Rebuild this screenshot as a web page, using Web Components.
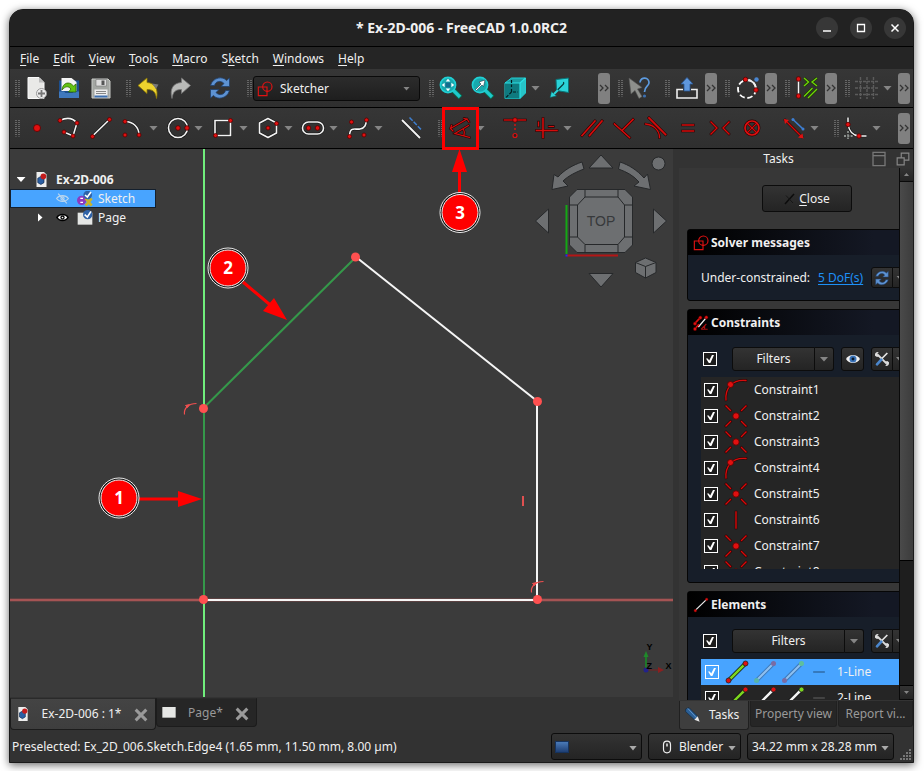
<!DOCTYPE html>
<html lang="en">
<head>
<meta charset="utf-8">
<title>Ex-2D-006 - FreeCAD 1.0.0RC2</title>
<style>
  html, body { height: 100%; margin: 0; }
  body { background: #fff; font: 12px/18px "Noto Sans", sans-serif; color: #f0f0f0; overflow: hidden; }
</style>
</head>
<body>
<app-window></app-window>

<script>
/* ---------- icon drawings, all on a 24 x 24 grid ---------- */
const dot = (x, y, r = 2) => `<circle cx="${x}" cy="${y}" r="${r}" fill="#e01010" stroke="#5a0000" stroke-width=".8"/>`;
const sel = (d, w = 1.7) => `<path d="${d}" fill="none" stroke="#2a0000" stroke-width="${w + 1}" stroke-linecap="square"/><path d="${d}" fill="none" stroke="#d40c0c" stroke-width="${w - .1}" stroke-linecap="square"/>`;
const wht = (d, w = 1.6) => `<path d="${d}" fill="none" stroke="#111" stroke-width="${w + 1}"/><path d="${d}" fill="none" stroke="#f4f4f4" stroke-width="${w}"/>`;
const seg = (a, b, c) => `<path d="M3.500 20.500L20.500 3.500" stroke="#111" stroke-width="4"/><path d="M3.500 20.500L20.500 3.500" stroke="${c}" stroke-width="2.500"/><circle cx="3.500" cy="20.500" r="2.500" fill="${a}" stroke="#222" stroke-width=".8"/><circle cx="20.500" cy="3.500" r="2.500" fill="${b}" stroke="#222" stroke-width=".8"/>`;
const pale = (a, b) => `<path d="M3.500 20.500L20.500 3.500" stroke="#3d78b8" stroke-width="4"/><path d="M3.500 20.500L20.500 3.500" stroke="#8fc0f0" stroke-width="2"/><circle cx="3.500" cy="20.500" r="2.500" fill="${a}"/><circle cx="20.500" cy="3.500" r="2.500" fill="${b}"/>`;
const lens = `<path d="M14 14L21.500 21.500" stroke="#075" stroke-width="5"/><path d="M14 14L21 21" stroke="#20c8cc" stroke-width="3.200"/><circle cx="9" cy="9" r="7.600" fill="#17a9ad" stroke="#20d0d4" stroke-width="1.600"/>`;
const ICONS = {
  'new': `<path d="M3 1.500H14L19 6.500V22.500H3Z" fill="#e9e9e7" stroke="#fafafa"/><path d="M14 1.500V6.500H19Z" fill="#bbb"/><circle cx="16.500" cy="17.500" r="5" fill="#eee" stroke="#999"/><path d="M16.500 14V21M13 17.500H20" stroke="#777" stroke-width="1.800"/>`,
  open: `<path d="M2 4.500H22V22H2Z" fill="#1c4f8f"/><path d="M4.500 2H14.500L19.500 6V15H4.500Z" fill="#f4f4f4"/><path d="M2 15.500H7L8.500 17H15.500L17 15.500H22V22H2Z" fill="#3f78bd"/><path d="M5 14C5.500 7 12 4.500 16.500 10L19 8V16H11.500L14 13C11 9.500 8 10.500 5 14Z" fill="#63c313" stroke="#2c6804" stroke-width=".8"/>`,
  save: `<path d="M3 3H19L21 5V22H3Z" fill="#a3a6a2" stroke="#c9cbc8"/><path d="M7 3.500H17.500V10H7Z" fill="#ddd" stroke="#777" stroke-width=".6"/><path d="M12.500 4.500H15.500V9H12.500Z" fill="#555"/><path d="M5.500 13.500H18.500V21.500H5.500Z" fill="#eee"/><path d="M7 15.500H17M7 17.500H17" stroke="#888"/><path d="M5.500 19.500H18.500V21.500H5.500Z" fill="#3d6fb0"/>`,
  undo: `<path d="M2 9.500L11 2V6.500C19 7 22.500 13 20.500 22.500C19.500 15.500 17 13.500 11 13.500V17.500Z" fill="#edd22e" stroke="#8d7a08" stroke-width=".8"/><path d="M16 7.500L22.500 8.500L20 13Z" fill="#777"/>`,
  redo: `<path d="M22.500 9.500L13.500 2V6.500C5 7 1.500 13 4 22.500C5 15.500 7.500 13.500 13.500 13.500V17.500Z" fill="#b9bab8" stroke="#777" stroke-width=".8"/>`,
  refresh: `<path d="M2.500 9.500C5 1 15 0 18.500 4.500L21.500 2V10.500H13L16 7.500C13 4 7.500 5 6.500 9.500Z" fill="#5d92d2" stroke="#1f3f6b" stroke-width=".8"/><path d="M21.500 14.500C19 23 9 24 5.500 19.500L2.500 22V13.500H11L8 16.500C11 20 16.500 19 17.500 14.500Z" fill="#5d92d2" stroke="#1f3f6b" stroke-width=".8"/>`,
  sketcher: `<path d="M2 9H15V22H2Z" fill="none" stroke="#e01212" stroke-width="1.700"/><circle cx="15.500" cy="8.500" r="7" fill="none" stroke="#e01212" stroke-width="1.700"/>`,
  fit: lens + `<path d="M9 2.800L11.300 5.600H6.700ZM9 15.200L6.700 12.400H11.300ZM2.800 9L5.600 6.700V11.300ZM15.200 9L12.400 11.300V6.700Z" fill="#fff"/><path d="M6.500 6.500H11.500V11.500H6.500Z" fill="#126"  fill-opacity=".45"/>`,
  zoomsel: lens + `<path d="M4.500 13.500L10 8L8 6L14 4L12.500 10.500L11 9L5.500 14.500Z" fill="#fff" stroke="#123" stroke-width=".5"/>`,
  cube: `<path d="M2 7L8.500 2H22.500V17L17 22.500H2Z" fill="#1c9da2" stroke="#1fd0d4"/><path d="M2 7H17V22.500H2Z" fill="#0f7a7f"/><path d="M17 7L22.500 2V17L17 22.500Z" fill="#27c3c7"/><path d="M2 7H17V22.500M17 7L22.500 2" fill="none" stroke="#2be0e4" stroke-width="1.200"/><path d="M8.500 4V11M8.500 13V16H15M8.500 16L3 21.500" fill="none" stroke="#031c1e" stroke-width="1.200" stroke-dasharray="3 1.500"/>`,
  plane: `<path d="M8 3.500L20.500 2V16.500L8.500 14.500Z" fill="#2bd3d8" stroke="#0a7478"/><path d="M14.500 9L8 15.500M14.500 9C16 8 16 6.500 15 6.500" fill="none" stroke="#083c3e" stroke-width="1.300"/><path d="M2 21.500L3.500 15.500L8.500 20Z" fill="#2bd3d8" stroke="#0a5558" stroke-width=".6"/><path d="M6 18L10 14" stroke="#2bd3d8" stroke-width="2"/>`,
  whats: `<path d="M1 2L14 11.500L9.500 13L14 20.500L11 22.500L7 14.500L3 18Z" fill="#8d8f8c" stroke="#555" stroke-width=".6"/><path d="M12 6.500C12.500 0 21.500 1 21 7C20.500 10.500 16.500 10 16.500 16" fill="none" stroke="#5d9be0" stroke-width="1.700"/><circle cx="16.500" cy="20" r="1.600" fill="#3c6fb0"/>`,
  exportup: `<path d="M8 13.500H2V22H22V13.500H16" fill="none" stroke="#eee" stroke-width="1.600"/><path d="M12 1.500L18 8H15V15H9V8H6Z" fill="#5f97dc" stroke="#2a5592" stroke-width=".8"/>`,
  circdash: `<circle cx="12" cy="13" r="9" fill="none" stroke="#fff" stroke-width="1.800" stroke-dasharray="5.500 2.700"/><path d="M12 4A9 9 0 0 1 21 13" fill="none" stroke="#eee" stroke-width="1.800"/>${dot(10.500, 3.500, 2.300)}${dot(21, 14, 2.300)}<circle cx="21.500" cy="3.500" r="2.200" fill="#4a86d0"/>`,
  constr: `${wht('M3.500 3V20')}${dot(3.500, 3, 2.300)}${dot(3.500, 20, 2.300)}<path d="M9 2L13.500 6L9 10M22 2L17 6L22 10M9 20.500L17.500 12M13 22L22 13" fill="none" stroke="#1b3600" stroke-width="2.600"/><path d="M9 2L13.500 6L9 10M22 2L17 6L22 10M9 20.500L17.500 12M13 22L22 13" fill="none" stroke="#6fd30b" stroke-width="1.400"/>`,
  grid: `<path d="M5.500 1V23M12 1V23M18.500 1V23M0 5.500H24M0 12H24M0 18.500H24" stroke="#5c5c5c" stroke-width="1.400" stroke-dasharray="3 1"/>`,
  point: dot(12, 12, 3.500),
  polyline: wht('M3 4.500C8 2 15 1 20 7L16 20L7 16') + dot(3, 4.500) + dot(20, 7) + dot(16, 20) + dot(7, 16),
  line: wht('M3 20.500L20.500 3.500') + dot(3.500, 20.500) + dot(20.500, 3.500),
  arc: wht('M4 5.500C12 5.500 18 11 18 19') + dot(4, 5.500) + dot(4, 19) + dot(18, 19),
  circle: wht('M21.500 12A9.500 9.500 0 1 1 2.500 12A9.500 9.500 0 1 1 21.500 12') + dot(12, 12, 2.300) + dot(21, 12, 2.300),
  rect: wht('M4 4.500H19.500V19.500H4Z') + dot(19.500, 4.500) + dot(4.500, 19.500),
  hex: wht('M12 2.500L20.500 7V17L12 21.500L3.500 17V7Z') + dot(12, 12) + dot(20.500, 7.500),
  slot: wht('M7.500 6H16.500A6 6 0 0 1 16.500 18H7.500A6 6 0 0 1 7.500 6Z') + dot(7.500, 12, 2.300) + dot(16.500, 12, 2.300),
  spline: wht('M3.500 20C4 10 9 14 14 13C19 12 20 9 20.500 4') + dot(5.500, 6) + dot(20.500, 4) + dot(3.500, 20.500) + dot(18, 19),
  extgeo: wht('M3 4L21 22', 2) + `<path d="M10.500 1.500L23 14.500" stroke="#3e7fd0" stroke-width="1.500" stroke-dasharray="4.500 1.500"/>`,
  dim: sel('M2.500 12.500L19 3M2.500 12.500L3.500 9.500M2.500 12.500L5 15M19 3L16 2.500M19 3L21 6M21.500 21.500L7 17.500L20.500 9.500M15.500 13.500C16.500 15 16.500 17 16 19', 1.300),
  horver: sel('M1.500 4H22.500', 1.500) + `<path d="M12 8V16" stroke="#d11" stroke-width="1.400" stroke-dasharray="2 2"/><circle cx="12" cy="19.500" r="2" fill="#222" stroke="#d11" stroke-width="1.200"/>` + dot(12, 4, 2.300),
  hv: sel('M8 2.500V21.500M1.500 14.500H22') + sel('M3.500 6V10M14 10.500H18.500', 1.300),
  parallel: sel('M2 19.500L15 5M9.500 19.500L22 5'),
  perp: sel('M2.500 8L17.500 21.500M10 14.500L21 3.500'),
  tangent: sel('M5 2L21.500 18.500', 1.900) + sel('M1.500 8C9 8.500 15.500 14 15.500 21.500', 1.400),
  equal: sel('M6.500 9H17.500M6.500 15H17.500', 1.600),
  symm: sel('M3 6L9 12L3 18M21 6L15 12L21 18', 1.500),
  block: `<circle cx="12" cy="12" r="7" fill="none" stroke="#2a0000" stroke-width="2.800"/>` + sel('M7.500 7.500L16.500 16.500M16.500 7.500L7.500 16.500', 1.300) + `<circle cx="12" cy="12" r="7" fill="none" stroke="#dc0f0f" stroke-width="1.700"/>`,
  toggle: sel('M3 4L20 21', 1.500) + `<path d="M2 3L7 4L3 8ZM21.500 22.500L16 21.500L20.500 17.500Z" fill="#d11"/><path d="M11 3.500L21 13" stroke="#3d7fd4" stroke-width="1.600"/><circle cx="11" cy="3.500" r="1.500" fill="#3d7fd4"/><circle cx="21" cy="13" r="1.500" fill="#3d7fd4"/>`,
  fillet: wht('M4 1.500V8C5 15 9 19.500 15 20H22.500', 1.500) + dot(4, 8.500, 2.200) + dot(15, 20, 2.200) + `<path d="M4 15V23M0 20H9" stroke="#8a8f8c" stroke-width="1.800" stroke-dasharray="2 1.300"/>`,
  doc: `<path d="M4 0H16L20 4V24H4Z" fill="#eee"/><path d="M6 10L11 7L16 10V17L11 20L6 17Z" fill="#2b5fa4" stroke="#0a2244"/><circle cx="15" cy="7" r="4.500" fill="#c41c1c"/>`,
  hidden: `<g fill="none" stroke="#bcd7ee" stroke-width="2"><path d="M1 12C6 5 18 5 23 12C18 19 6 19 1 12Z"/><circle cx="12" cy="12" r="3"/><path d="M4 3L20 21"/></g>`,
  shown: `<path d="M0 12C5 3 19 3 24 12C19 21 5 21 0 12Z" fill="#000"/><path d="M3.500 12C7 6.500 17 6.500 20.500 12C17 17.500 7 17.500 3.500 12Z" fill="#fff"/><circle cx="12" cy="12" r="4" fill="#000"/><circle cx="12" cy="12" r="1.600" fill="#fff"/>`,
  sketchobj: `<circle cx="7" cy="14" r="7" fill="#8c3bbf"/><path d="M5 11H9M5 17H9" stroke="#fff" stroke-width="2"/><path d="M13 11L22 22M22 11L13 22" stroke="#c9b428" stroke-width="4"/><circle cx="16" cy="6" r="6.500" fill="#2f63a8"/><path d="M12 6L15.500 9L21 1.500" fill="none" stroke="#fff" stroke-width="2.400"/>`,
  pageobj: `<path d="M1 4H23V22H1Z" fill="#e4e6e4"/><circle cx="16" cy="7" r="7" fill="#2f63a8"/><path d="M11.500 7L15.500 10.500L21 2" fill="none" stroke="#fff" stroke-width="2.400"/>`,
  page: `<path d="M2 3H22V19H2Z" fill="#e6e7e5"/>`,
  x: `<path d="M4 4L20 20M20 4L4 20" stroke="#9a9a9a" stroke-width="4.500"/>`,
  dark: `<path d="M4 22L22 2" stroke="#0c0c0c" stroke-width="3"/><path d="M6 5L20 20" stroke="#161616" stroke-width="2"/>`,
  conshead: `<path d="M2.500 13L11 4" stroke="#d11" stroke-width="2.500"/><path d="M8 18L19 5" stroke="#f4f4f4" stroke-width="2"/><path d="M2.500 21L9 14" stroke="#d11" stroke-width="2.500"/>` + dot(11, 4, 2.500) + dot(3, 13, 2.500) + dot(20, 3.500, 2.500) + dot(3, 21, 2.500) + `<path d="M12 21.500L20 13.500M12 21.500H22M17.500 16V21" fill="none" stroke="#a11" stroke-width="1.600"/>`,
  eye: `<path d="M0 12C5 3 19 3 24 12C19 21 5 21 0 12Z" fill="#f0f0f0"/><circle cx="12" cy="12" r="6" fill="#3a73b8"/><circle cx="12" cy="12" r="2.500" fill="#0b1a2c"/>`,
  tools: `<path d="M5 5L19 19" stroke="#ddd" stroke-width="3"/><path d="M20 3L11 12" stroke="#e6e6e6" stroke-width="2.600"/><path d="M11 13L4.500 20" stroke="#4a86cc" stroke-width="4" stroke-linecap="round"/><path d="M1.500 7C1 3 3 1 7 1.500L5 4.500L8 8L4.500 9ZM22.500 17C23 21 21 23 17 22.500L19 19L16 16L20 15Z" fill="#ddd"/>`,
  ctan: sel('M2 22C1 11 8 1 22 2.500', 1.400) + dot(6.500, 6.500, 3),
  ccoin: sel('M2 2L6.500 6.500M22 2L17.500 6.500M2 22L6.500 17.500M22 22L17.500 17.500', 1.500) + dot(12, 12, 3.200),
  cvert: sel('M12 4V20', 1.500),
  e1: seg('#e01010', '#e01010', '#7cd61f'),
  e2: pale('#58b5a8', '#7a6ca4'),
  e3: pale('#7a6ca4', '#5fbf9c'),
  f1: seg('#7cd61f', '#e01010', '#7cd61f'),
  f2: seg('#7cd61f', '#e01010', '#f2f2f2'),
  f3: seg('#e01010', '#7cd61f', '#f2f2f2'),
  dash: `<path d="M5 12H19" stroke="#2a5f95" stroke-width="1.500"/>`,
  dash2: `<path d="M5 12H19" stroke="#555" stroke-width="1.500"/>`,
  pencil: `<path d="M1 3L6 1L19 14L14 19L1 7Z" fill="#2c5f94" stroke="#0f2840"/><path d="M4 2L17 16" stroke="#5f93c8" stroke-width="1.500"/><path d="M19 14L22 22L14 19Z" fill="#e8e8e8"/>`,
  float: `<path d="M3 2H21V22H3Z" fill="none" stroke="#777" stroke-width="2"/><path d="M3 7H21" stroke="#777" stroke-width="2"/>`,
  restore: `<path d="M9 2H22V14H9Z" fill="none" stroke="#888" stroke-width="2"/><path d="M2 10H14V22H2Z" fill="#333" stroke="#888" stroke-width="2"/>`,
  mouse: `<path d="M6 8A6 6 0 0 1 18 8V16A6 6 0 0 1 6 16Z" fill="none" stroke="#eee" stroke-width="2"/><path d="M12 6V11" stroke="#eee" stroke-width="2.500"/>`
};

/* Registers a custom element whose shadow root holds the given markup and styles. */
function define(tag, css, html) {
  customElements.define(tag, class extends HTMLElement {
    constructor() { super(); this.attachShadow({ mode: 'open' }); }
    connectedCallback() {
      const t = document.createElement('template');
      t.innerHTML = `<style>*,:host{box-sizing:border-box}${css}</style>` + (typeof html === 'function' ? html(this) : html);
      this.shadowRoot.replaceChildren(t.content.cloneNode(true));
    }
  });
}
const at = (el, n, d = '') => el.getAttribute(n) ?? d;
const BTN = `button{font:inherit;color:inherit;margin:0;padding:0;border:1px solid #0c0c0c;border-radius:3px;background:linear-gradient(#333,#242424);display:flex;align-items:center;justify-content:center}`;

define('x-icon', ':host{display:block;flex:none}svg{display:block}', el => {
  const s = at(el, 'size', '24');
  return `<svg width="${s}" height="${s}" viewBox="0 0 24 24" aria-hidden="true">${ICONS[at(el, 'name')]}</svg>`;
});

define('drop-arrow', ':host{display:block;flex:none;width:9px;height:5px;background:#858585;clip-path:polygon(0 0,100% 0,50% 100%)}', '');

define('tick-box', `:host{display:block;flex:none}
  input{appearance:none;display:block;margin:0;width:14px;height:14px;border:1px solid #fff;background:var(--tick-bg,#1c1c1c);position:relative}
  input:checked::before{content:"";position:absolute;inset:2px;background:#fff;clip-path:polygon(0 45%,22% 45%,40% 68%,75% 0,100% 0,55% 100%,35% 100%)}`,
  el => `<input type="checkbox" checked aria-label="${at(el, 'label')}">`);

/* ---------- title bar and menus ---------- */
define('title-bar', `:host{display:grid;grid-template-columns:1fr auto 1fr;align-items:center;height:37px;flex:none;background:#222;border-bottom:1px solid #000}
  h1{margin:0;font-size:14px;line-height:20px;font-weight:700;grid-column:2}
  div{display:flex;gap:12px;justify-content:flex-end;padding-right:7px}
  button{width:22px;height:22px;padding:0;border:0;border-radius:50%;background:#373737;color:#fff;display:grid;place-items:center}`,
  `<h1><slot></slot></h1><div>
   <button aria-label="Minimize"><svg width="10" height="10"><path d="M1 8H9" stroke="#fff" stroke-width="1.500"/></svg></button>
   <button aria-label="Maximize"><svg width="10" height="10"><path d="M1.500 1.500H8.500V8.500H1.500Z" fill="none" stroke="#fff" stroke-width="1.300"/></svg></button>
   <button aria-label="Close window"><svg width="10" height="10"><path d="M1.500 1.500L8.500 8.500M8.500 1.500L1.500 8.500" stroke="#fff" stroke-width="1.500"/></svg></button></div>`);

define('menu-bar', `:host{display:flex;gap:14px;padding:2px 10px 0;height:22px;flex:none;align-items:center;background:#252525}
  button{font:inherit;color:inherit;border:0;background:none;padding:0}
  u{text-underline-offset:2px}`,
  ['_File', '_Edit', '_View', '_Tools', '_Macro', 'S_ketch', '_Windows', '_Help']
    .map(m => `<button>${m.replace(/_(.)/, '<u>$1</u>')}</button>`).join(''));

/* ---------- tool bars ---------- */
define('tool-grip', `:host{display:block;flex:none;width:7px;height:17px;padding:0 1px}
  i{display:block;width:5px;height:17px;background:repeating-linear-gradient(#666 0 1px,transparent 1px 2px);clip-path:polygon(0 0,40% 0,40% 100%,60% 100%,60% 0,100% 0,100% 100%,0 100%)}`, '<i></i>');

define('tool-button', `:host{display:flex;flex:none;align-items:center;position:relative}
  button{border:0;background:none;padding:0;display:flex;align-items:center;height:32px}
  .main{width:32px;justify-content:center}.more{width:13px}
  :host([marked])::after{content:"";position:absolute;left:-2px;top:-5px;width:37px;height:43px;box-sizing:border-box;border:3px solid #f00;z-index:3}`,
  el => `<button class="main" aria-label="${at(el, 'label')}"><x-icon name="${at(el, 'icon')}"></x-icon></button>` +
        (el.hasAttribute('more') ? `<button class="more" aria-label="${at(el, 'label')} options"><drop-arrow></drop-arrow></button>` : ''));

define('tool-more', `:host{display:block;flex:none}
  button{width:12px;height:31px;padding:0;border:0;border-radius:3px;background:#808080;display:grid;place-items:center}`,
  `<button aria-label="More tools"><svg width="10" height="8"><path d="M1 1L4 4L1 7M6 1L9 4L6 7" fill="none" stroke="#333" stroke-width="1.300"/></svg></button>`);

define('bench-select', `:host{display:block;position:relative;width:167px}
  select{appearance:none;font:inherit;color:inherit;width:100%;height:25px;margin:0;border:1px solid #0a0a0a;border-radius:3px;background:linear-gradient(#2c2c2c,#1e1e1e);padding:1px 20px 0 26px}
  x-icon,drop-arrow{position:absolute;pointer-events:none}
  x-icon{left:4px;top:5px}drop-arrow{right:10px;top:11px;width:7px;height:4px}`,
  `<select aria-label="Workbench"><option>Sketcher</option></select><x-icon name="sketcher" size="16"></x-icon><drop-arrow></drop-arrow>`);

define('tool-bar', `:host{display:flex;flex:none;align-items:center;padding:0 3px 0 4px;background:linear-gradient(#363636,#2f2f2f);border-bottom:1px solid #000}
  ::slotted(.push){margin-left:auto}`, '<slot></slot>');

define('tool-group', `:host{display:flex;align-items:center;margin-left:var(--lead,0)}`, '<tool-grip></tool-grip><slot></slot>');

/* ---------- model tree ---------- */
define('tree-row', `:host{display:flex;align-items:center;height:19px;border:1px solid transparent}
  :host([selected]){background:#48a4ff;border-color:#14202e}
  .tw{width:20px;display:flex;justify-content:center}
  .tri{width:9px;height:5px;background:#fff;clip-path:polygon(0 0,100% 0,50% 100%)}
  .tri.r{width:5px;height:9px;clip-path:polygon(0 0,100% 50%,0 100%)}
  .eye{margin:0 8px 0 6px}
  b{margin-left:7px}span{margin-left:5px}`,
  el => el.hasAttribute('root')
    ? `<div class="tw"><i class="tri"></i></div><x-icon name="doc" size="15" style="margin-left:3px"></x-icon><b><slot></slot></b>`
    : `<div class="tw" style="margin-left:19px"><i class="${el.hasAttribute('branch') ? 'tri r' : ''}"></i></div><x-icon class="eye" name="${at(el, 'eye')}" size="13"></x-icon><x-icon name="${at(el, 'icon')}" size="16"></x-icon><span><slot></slot></span>`);

define('model-tree', ':host{display:block;position:absolute;left:0;top:21px;width:146px}',
  `<tree-row root>Ex-2D-006</tree-row><tree-row selected eye="hidden" icon="sketchobj">Sketch</tree-row><tree-row branch eye="shown" icon="pageobj">Page</tree-row>`);

/* ---------- drawing area ---------- */
const badge = (x, y, n) => `<circle cx="${x}" cy="${y}" r="20" fill="#111" stroke="#eee"/><circle cx="${x}" cy="${y}" r="18" fill="#f00" stroke="#eee"/><text x="${x}" y="${y + 6}" text-anchor="middle" font-size="17" font-weight="700" fill="#fff">${n}</text>`;
const vertex = (x, y) => `<circle cx="${x}" cy="${y}" r="4.500" fill="#ff5050"/>`;
const tan = (x, y) => `<path d="M${x} ${y + 11}C${x - 1} ${y + 5} ${x + 4} ${y} ${x + 12} ${y}" fill="none" stroke="#f05050" stroke-width="1.200"/><path d="M${x + 1} ${y + 2}L${x + 5} ${y + 1}L${x + 3} ${y + 4}Z" fill="#f05050" stroke="#f05050"/>`;
define('sketch-view', `:host{display:block;position:relative;background:#3b3b3b;overflow:hidden;min-width:0;min-height:0}
  svg.draw{display:block;width:100%;height:100%}
  svg.nav{position:absolute;right:0;top:0}`,
  `<svg class="draw" viewBox="10 149 663 548" preserveAspectRatio="xMinYMin meet" role="img" aria-label="Sketch geometry">
    <path d="M10 600H673" stroke="#7a4848" stroke-width="3"/><path d="M10 600H673" stroke="#d06060"/>
    <path d="M204 149V408M204 600V697" stroke="#70ee7c" stroke-width="2"/>
    <path d="M204 408V600M203.500 408L356 257" stroke="#35984a" stroke-width="2"/>
    <path d="M356 257L537 401V600H204" fill="none" stroke="#f5f5f5" stroke-width="2"/>
    ${vertex(355.500, 257)}${vertex(537.500, 401.500)}${vertex(537.500, 599.500)}${vertex(203.500, 599.500)}${vertex(203.500, 408.500)}
    ${tan(184.500, 403.500)}${tan(531.500, 581.500)}
    <path d="M523 496V506" stroke="#e05050" stroke-width="2"/>
    <path d="M139 499H180M243 282L275 309M459.500 193V170" stroke="#f00" stroke-width="3"/>
    <path d="M178 491L202 499L178 507ZM287 320L263 311L274 298ZM459.500 149L452 172H467Z" fill="#f00"/>
    ${badge(119, 498, 1)}${badge(228, 268, 2)}${badge(460, 212.500, 3)}
    <path d="M646 669V654" stroke="#1f7a2a" stroke-width="2"/><path d="M643.500 657L646 651L648.500 657Z" fill="#1f8a2a"/>
    <path d="M646 670H659" stroke="#7a2020" stroke-width="1"/><path d="M658 667L664 670L658 673Z" fill="#8a2020"/>
    <circle cx="646" cy="670" r="2.500" fill="#22228a"/>
    <g font-family="Liberation Sans, sans-serif" font-size="9" font-weight="700" fill="#000"><text x="646.500" y="650">Y</text><text x="646.500" y="669">Z</text><text x="665.500" y="669">X</text></g>
  </svg>
  <svg class="nav" width="143" height="146" viewBox="530 149 143 146" role="img" aria-label="Navigation cube">
    <g fill="#6d6f71" stroke="#26282a" stroke-width="1">
    <circle cx="658.500" cy="163.500" r="6.500"/>
    <path d="M601 155L613 168H589ZM535.500 221L548.500 209V233ZM666.500 221L653.500 209V233ZM601 287L589 273.500H613Z"/>
    <path d="M582 162L584 169C576 172 568 176 563 181L568 186L552 189.500L554 174.500L558 177C564 170 573 165 582 162Z"/>
    <path d="M620 162L618.500 169C627 172 634 176 639 182L634 186L650.500 189.500L647.500 174L644 178C637 170 629 165 620 162Z"/>
    <path d="M577 189.500H625L632.500 197V245L625 252.500H577L569.500 245V197Z"/>
    <path d="M585 197H618L624.500 205V237L618 244.500H585L577.500 237V205Z"/>
    <path d="M585 189.500V197M618 189.500V197M585 244.500V252.500M618 244.500V252.500M569.500 205H577.500M569.500 237H577.500M624.500 205H632.500M624.500 237H632.500"/>
    <path d="M645.500 258L656 262.500V272.500L645.500 278L635.500 272.500V262.500Z"/><path d="M635.500 262.500L645.500 266.500L656 262.500M645.500 266.500V278"/></g>
    <path d="M566.500 205V254" stroke="#14a814" stroke-width="2"/><path d="M567 255.500H618" stroke="#b41616" stroke-width="2"/><path d="M565.500 254.500H567.500V256.500H565.500Z" fill="#22f"/>
    <text x="601" y="226" text-anchor="middle" font-family="Liberation Sans, sans-serif" font-size="14" fill="#37393b">TOP</text>
  </svg>
  <model-tree></model-tree>`);

define('view-tabs', `:host{display:flex;flex:none;align-items:flex-start;background:#333;height:33px;padding-top:1px}
  ${BTN}
  div{display:flex;align-items:center;border:1px solid #1c1c1c;border-radius:0 0 4px 4px;border-top-color:#2a2a2a}
  div.on{background:linear-gradient(#444,#3e3e3e);width:146px;height:32px;padding:0 6px 0 5px}
  div.off{background:#262626;width:101px;height:29px;padding:0 6px 0 4px;color:#999}
  button{border:0;background:none}
  .t{flex:1}.c{width:16px;height:16px;margin-top:2px}`,
  `<div class="on"><x-icon name="doc" size="14"></x-icon><button class="t">Ex-2D-006 : 1*</button><button class="c" aria-label="Close Ex-2D-006"><x-icon name="x" size="16"></x-icon></button></div>
   <div class="off"><x-icon name="page" size="16"></x-icon><button class="t">Page*</button><button class="c" aria-label="Close Page"><x-icon name="x" size="16"></x-icon></button></div>`);

/* ---------- task panel ---------- */
define('task-box', `:host{display:block;width:calc(100% + 22px);border:1px solid #060606;border-radius:3px;background:#171e29;margin-bottom:8px}
  header{display:flex;align-items:center;gap:2px;height:25px;padding-left:5px;background:linear-gradient(90deg,#000,#141824 80%);font-weight:700}
  h2{font:inherit;font-weight:700;margin:0}
  section{padding:12px 13px 13px}`,
  el => `<header><x-icon name="${at(el, 'icon')}" size="16"></x-icon><h2>${at(el, 'heading')}</h2></header><section><slot></slot></section>`);

define('split-button', `:host{display:flex;min-width:0;height:24px}${BTN}
  .m{flex:1;border-radius:3px 0 0 3px}.d{width:19px;border-left:0;border-radius:0 3px 3px 0}
  :host([small]) .m{flex:none;width:22px}:host([small]) .d{width:14px}:host([small]) drop-arrow{width:7px;height:4px}`,
  el => `<button class="m" aria-label="${at(el, 'label')}">${el.hasAttribute('icon') ? `<x-icon name="${at(el, 'icon')}" size="16"></x-icon>` : '<slot></slot>'}</button><button class="d" aria-label="${at(el, 'label')} menu"><drop-arrow></drop-arrow></button>`);

define('filter-row', `:host{display:flex;align-items:center;gap:7px;padding-left:2px}${BTN}
  .f{flex:1;margin-left:8px}button{width:23px;height:24px}`,
  el => `<tick-box label="Select all"></tick-box><split-button class="f" label="Filters">Filters</split-button>${el.hasAttribute('eye') ? '<button aria-label="Show or hide"><x-icon name="eye" size="14"></x-icon></button>' : ''}<split-button small icon="tools" label="Settings"></split-button>`);

define('item-list', `:host{display:block;margin-top:6px;background:#252525;overflow:hidden;max-height:192px}
  ul{margin:0;padding:0;list-style:none}`, '<ul><slot></slot></ul>');

define('item-row', `:host{display:flex;align-items:center;height:26px;padding-left:3px}
  :host([wide]){padding-left:4px}
  :host([selected]){background:#48a4ff;--tick-bg:#48a4ff}
  .i{display:flex;align-items:center;gap:4px;margin:0 6px}
  :host([wide]) .i{margin-right:8px}`,
  el => `<tick-box label="${el.textContent}"></tick-box><span class="i">${at(el, 'icon').split(' ').map(n => `<x-icon name="${n}" size="${n.startsWith('dash') ? 20 : 24}"></x-icon>`).join('')}</span><span><slot></slot></span>`);

define('close-button', `:host{display:flex;justify-content:center;margin-bottom:17px}${BTN}button{width:90px;height:27px;gap:4px}
  u{text-underline-offset:2px}`, `<button><x-icon name="dark" size="12"></x-icon><span><u>C</u>lose</span></button>`);

define('scroll-bar', `:host{display:flex;flex-direction:column;width:14px;background:#1e1e1e;border-left:1px solid #0a0a0a}
  ${BTN}button{height:14px;border:0;border-bottom:1px solid #0a0a0a;border-radius:0}
  .thumb{flex:379;background:linear-gradient(90deg,#4a4a4a,#3c3c3c);border-bottom:1px solid #000}.track{flex:125;border-bottom:1px solid #000}
  drop-arrow{width:5px;height:3px}.up drop-arrow{transform:rotate(180deg)}`,
  `<button class="up" aria-label="Scroll up"><drop-arrow></drop-arrow></button><div class="thumb"></div><div class="track"></div><button aria-label="Scroll down"><drop-arrow></drop-arrow></button>`);

const cons = ['ctan', 'ccoin', 'ccoin', 'ctan', 'ccoin', 'cvert', 'ccoin', 'ccoin'];
define('task-panel', `:host{display:flex;flex-direction:column;min-width:0;min-height:0;padding-left:6px;background:#333}
  header{display:grid;grid-template-columns:1fr auto 1fr;align-items:center;height:19px;padding-right:3px}
  header span{grid-column:2;margin-right:32px}
  header div{display:flex;gap:9px;justify-content:flex-end}
  header button{border:0;padding:0;background:none}
  .body{flex:1;display:flex;min-height:0}
  .scroll{flex:1;min-width:0;overflow:hidden;background:#373737;padding:17px 0 0 8px}
  .line{display:flex;align-items:center;gap:8px;margin:0 0 -1px;white-space:nowrap}
  a{color:#1e90f5;text-underline-offset:2px}
  close-button{margin-right:-13px;margin-left:14px}
  .line split-button{height:21px}`,
  `<header><span>Tasks</span><div><button aria-label="Toggle overlay"><x-icon name="float" size="16"></x-icon></button><button aria-label="Undock"><x-icon name="restore" size="14"></x-icon></button></div></header>
   <div class="body"><div class="scroll">
     <close-button></close-button>
     <task-box icon="sketcher" heading="Solver messages"><div class="line"><span>Under-constrained:</span><a href="#dof">5 DoF(s)</a><split-button small icon="refresh" label="Update"></split-button></div></task-box>
     <task-box icon="conshead" heading="Constraints"><filter-row eye></filter-row><item-list>${cons.map((c, i) => `<item-row icon="${c}">Constraint${i + 1}</item-row>`).join('')}</item-list></task-box>
     <task-box icon="line" heading="Elements"><filter-row></filter-row><item-list><item-row wide selected icon="e1 e2 e3 dash">1-Line</item-row><item-row wide icon="f1 f2 f3 dash2">2-Line</item-row></item-list></task-box>
   </div><scroll-bar></scroll-bar></div>`);

define('panel-tabs', `:host{display:flex;flex:none;align-items:flex-start;gap:1px;background:#333;padding:1px 0 0 6px}
  ${BTN}button{border-color:#202020;border-radius:0 0 3px 3px;border-top:0;height:26px;background:#262626;color:#999;padding:0 3px;white-space:nowrap}
  button.on{height:29px;background:#3e3e3e;color:#f0f0f0;width:70px;gap:8px;justify-content:flex-start;padding-left:5px}
  .p{width:87px}.r{flex:1}`,
  `<button class="on"><x-icon name="pencil" size="16"></x-icon>Tasks</button><button class="p">Property view</button><button class="r">Report vi...</button>`);

define('status-bar', `:host{display:flex;flex:none;align-items:center;gap:6px;height:32px;padding:0 1px 0 2px;background:#323232;white-space:nowrap}
  ${BTN}output{flex:1;overflow:hidden;padding-top:2px}
  button{height:27px;padding:1px 4px 0;justify-content:space-between}
  drop-arrow{width:8px;height:5px;background:#aaa;margin-top:3px}
  .n{width:91px;padding-left:3px}.n i{width:14px;height:12px;background:linear-gradient(#4a7ab8,#1e3f74);border:1px solid #16335e}
  .b{width:93px;padding-left:11px}.s{width:147px}
  svg{align-self:flex-end;margin-bottom:1px}`,
  el => {
    let g = '';
    for (let r = 0; r < 4; r++) for (let c = 3 - r; c < 4; c++) g += `<path d="M${c * 3} ${r * 3}h2v2h-2z" fill="#777"/>`;
    return `<output>Preselected: Ex_2D_006.Sketch.Edge4 (1.65 mm, 11.50 mm, 8.00 µm)</output>
    <button class="n" aria-label="Notifications"><i></i><drop-arrow></drop-arrow></button>
    <button class="b"><x-icon name="mouse" size="14"></x-icon>Blender<drop-arrow></drop-arrow></button>
    <button class="s">34.22 mm x 28.28 mm<drop-arrow></drop-arrow></button><svg width="12" height="12" aria-hidden="true">${g}</svg>`;
  });

/* ---------- whole window ---------- */
const tb = list => list.map(s => {
  const [n, m] = s.split('+');
  return n === '|' ? '<i class="sp"></i>' : n === '>' ? '<tool-more class="mo"></tool-more>' : `<tool-button icon="${n}" label="${n}"${m ? ' more' : ''}${n === 'dim' ? ' marked' : ''}></tool-button>`;
}).join('');
define('app-window', `:host{display:block;height:100vh;padding:9px 10px 8px 9px}
  .win{height:100%;display:flex;flex-direction:column;border:1px solid #1a1a1a;border-radius:14px 14px 0 0;box-shadow:0 2px 8px rgba(0,0,0,.6);background:#333}
  title-bar{border-radius:13px 13px 0 0}
  tool-bar.a{height:39px}tool-bar.b{height:41px}
  .g{--lead:8px}.w{--lead:10px}.n{--lead:7px}.sp{flex:none;width:8px}.k .sp{width:10px}.mo{margin-left:2px}
  main{flex:1;min-height:0;display:grid;grid-template-columns:minmax(0,1fr) 240px;grid-template-rows:minmax(0,1fr)}
  .left,.right{display:flex;flex-direction:column;min-height:0;min-width:0}
  .left sketch-view,.right task-panel{flex:1}`,
  `<div class="win">
    <title-bar>* Ex-2D-006 - FreeCAD 1.0.0RC2</title-bar>
    <menu-bar></menu-bar>
    <tool-bar class="a">
      <tool-group>${tb(['new', 'open', 'save'])}</tool-group>
      <tool-group class="g">${tb(['undo', 'redo', '|', 'refresh'])}</tool-group>
      <tool-group class="w"><bench-select></bench-select></tool-group>
      <tool-group class="g">${tb(['fit', 'zoomsel', 'cube+1', 'plane'])}</tool-group>
      <tool-more class="push"></tool-more>
      <tool-group class="n">${tb(['whats'])}</tool-group>
      <tool-group class="g">${tb(['exportup', '>'])}</tool-group>
      <tool-group class="n">${tb(['circdash', '>'])}</tool-group>
      <tool-group class="n">${tb(['constr', '>'])}</tool-group>
      <tool-group class="n">${tb(['grid+1', '>'])}</tool-group>
    </tool-bar>
    <tool-bar class="b">
      <tool-group>${tb(['point', 'polyline', 'line', 'arc+1', 'circle+1', 'rect+1', 'hex+1', 'slot+1', 'spline+1', '|', 'extgeo'])}</tool-group>
      <tool-group class="w k">${tb(['dim+1', '|', 'horver', 'hv+1', 'parallel', 'perp', 'tangent', 'equal', 'symm', 'block', '|', 'toggle+1'])}</tool-group>
      <tool-group class="w">${tb(['fillet+1'])}</tool-group>
      <tool-more class="push"></tool-more>
    </tool-bar>
    <main>
      <div class="left"><sketch-view></sketch-view><view-tabs></view-tabs></div>
      <div class="right"><task-panel></task-panel><panel-tabs></panel-tabs></div>
    </main>
    <status-bar></status-bar>
  </div>`);
</script>
</body>
</html>
